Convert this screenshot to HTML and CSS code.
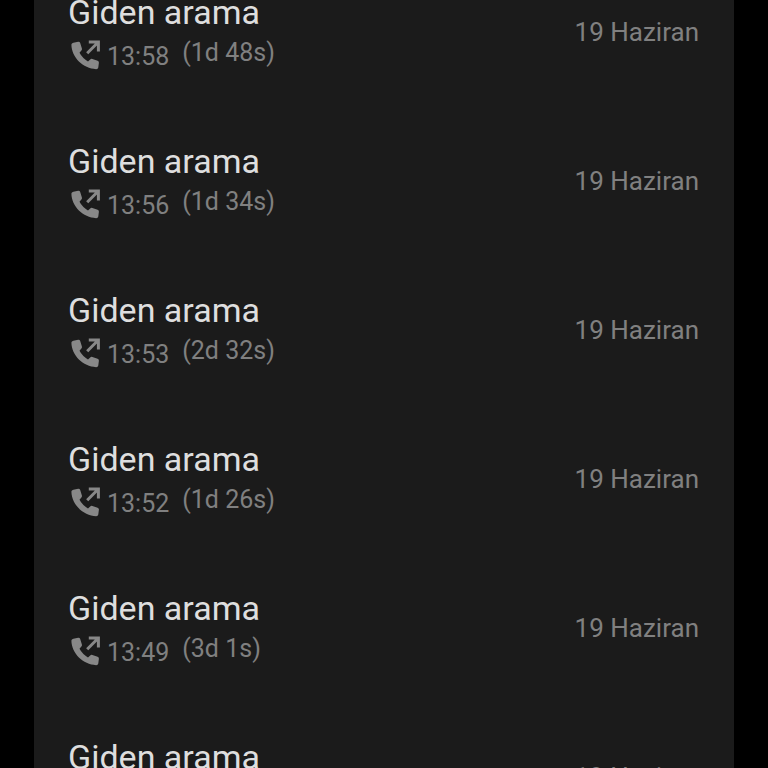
FILE: index.html
```html
<!DOCTYPE html>
<html lang="tr">
<head>
    <meta charset="UTF-8">
    <meta name="viewport" content="width=device-width, initial-scale=1.0">
    <title>Arama geçmişi</title>
    <link rel="stylesheet" href="styles.css">
</head>
<body>
    <svg class="sprite" aria-hidden="true">
        <symbol id="outgoing" viewBox="0 0 30 30">
            <path class="handset" d="M2.4 2.7 L7.2 1.8 Q8.7 1.6 9.2 3 L10.9 8.4 Q11.2 9.6 10.4 10.5 L8.5 12.8 Q11.4 18.2 17 21.4 L19.2 19.4 Q20.2 18.6 21.4 19 L26.6 20.7 Q28.1 21.2 27.9 22.8 L27.3 27.4 Q27 29.2 25.2 29.2 C12 28.6 .6 17.6 .4 4.6 Q.4 3 2.4 2.7 Z"/>
            <path class="arrow" d="M16.2 13.2 L26.6 2.8 M17.8 2 H27.4 V11.6"/>
        </symbol>
    </svg>
    <main class="panel">
        <ul class="call-list">
            <li class="call">
                <div class="info">
                    <div class="title">Giden arama</div>
                    <div class="meta">
                        <svg class="icon" aria-hidden="true"><use href="#outgoing"/></svg>
                        <span class="time">13:58</span>
                        <span class="duration">(1d 48s)</span>
                    </div>
                </div>
                <div class="date">19 Haziran</div>
            </li>
            <li class="call">
                <div class="info">
                    <div class="title">Giden arama</div>
                    <div class="meta">
                        <svg class="icon" aria-hidden="true"><use href="#outgoing"/></svg>
                        <span class="time">13:56</span>
                        <span class="duration">(1d 34s)</span>
                    </div>
                </div>
                <div class="date">19 Haziran</div>
            </li>
            <li class="call">
                <div class="info">
                    <div class="title">Giden arama</div>
                    <div class="meta">
                        <svg class="icon" aria-hidden="true"><use href="#outgoing"/></svg>
                        <span class="time">13:53</span>
                        <span class="duration">(2d 32s)</span>
                    </div>
                </div>
                <div class="date">19 Haziran</div>
            </li>
            <li class="call">
                <div class="info">
                    <div class="title">Giden arama</div>
                    <div class="meta">
                        <svg class="icon" aria-hidden="true"><use href="#outgoing"/></svg>
                        <span class="time">13:52</span>
                        <span class="duration">(1d 26s)</span>
                    </div>
                </div>
                <div class="date">19 Haziran</div>
            </li>
            <li class="call">
                <div class="info">
                    <div class="title">Giden arama</div>
                    <div class="meta">
                        <svg class="icon" aria-hidden="true"><use href="#outgoing"/></svg>
                        <span class="time">13:49</span>
                        <span class="duration">(3d 1s)</span>
                    </div>
                </div>
                <div class="date">19 Haziran</div>
            </li>
            <li class="call">
                <div class="info">
                    <div class="title">Giden arama</div>
                </div>
                <div class="date">19 Haziran</div>
            </li>
        </ul>
    </main>
</body>
</html>
```

FILE: styles.css
```css
body {
    margin: 0;
    height: 100vh;
    overflow: hidden;
    background-color: #000;
    color: #808080;
    font-family: Roboto, "Noto Sans", sans-serif;
    font-size: 25px;
    line-height: 32px;
}
.sprite {
    display: none;
}
.panel {
    height: 100%;
    margin: 0 34px;
    overflow: hidden;
    background-color: #1b1b1b;
}
/* list is scrolled part way into its first call */
.call-list {
    list-style: none;
    margin: -43px 0 0;
    padding: 0 35px 0 34px;
}
.call {
    display: flex;
    justify-content: space-between;
    align-items: center;
    height: 149px;
}
.info {
    min-height: 80px;
    padding-top: 2px;
}
.title {
    color: #dedede;
    font-size: 34px;
    line-height: 38px;
}
.meta {
    display: flex;
    align-items: flex-start;
    padding-top: 6px;
}
.icon {
    width: 30px;
    height: 30px;
    margin: 3px 6px 0 3px;
}
.time {
    padding-top: 4px;
    margin-right: 13px;
}
.date {
    font-size: 26px;
}
.handset {
    fill: #888;
}
.arrow {
    fill: none;
    stroke: #888;
    stroke-width: 3;
}
```
